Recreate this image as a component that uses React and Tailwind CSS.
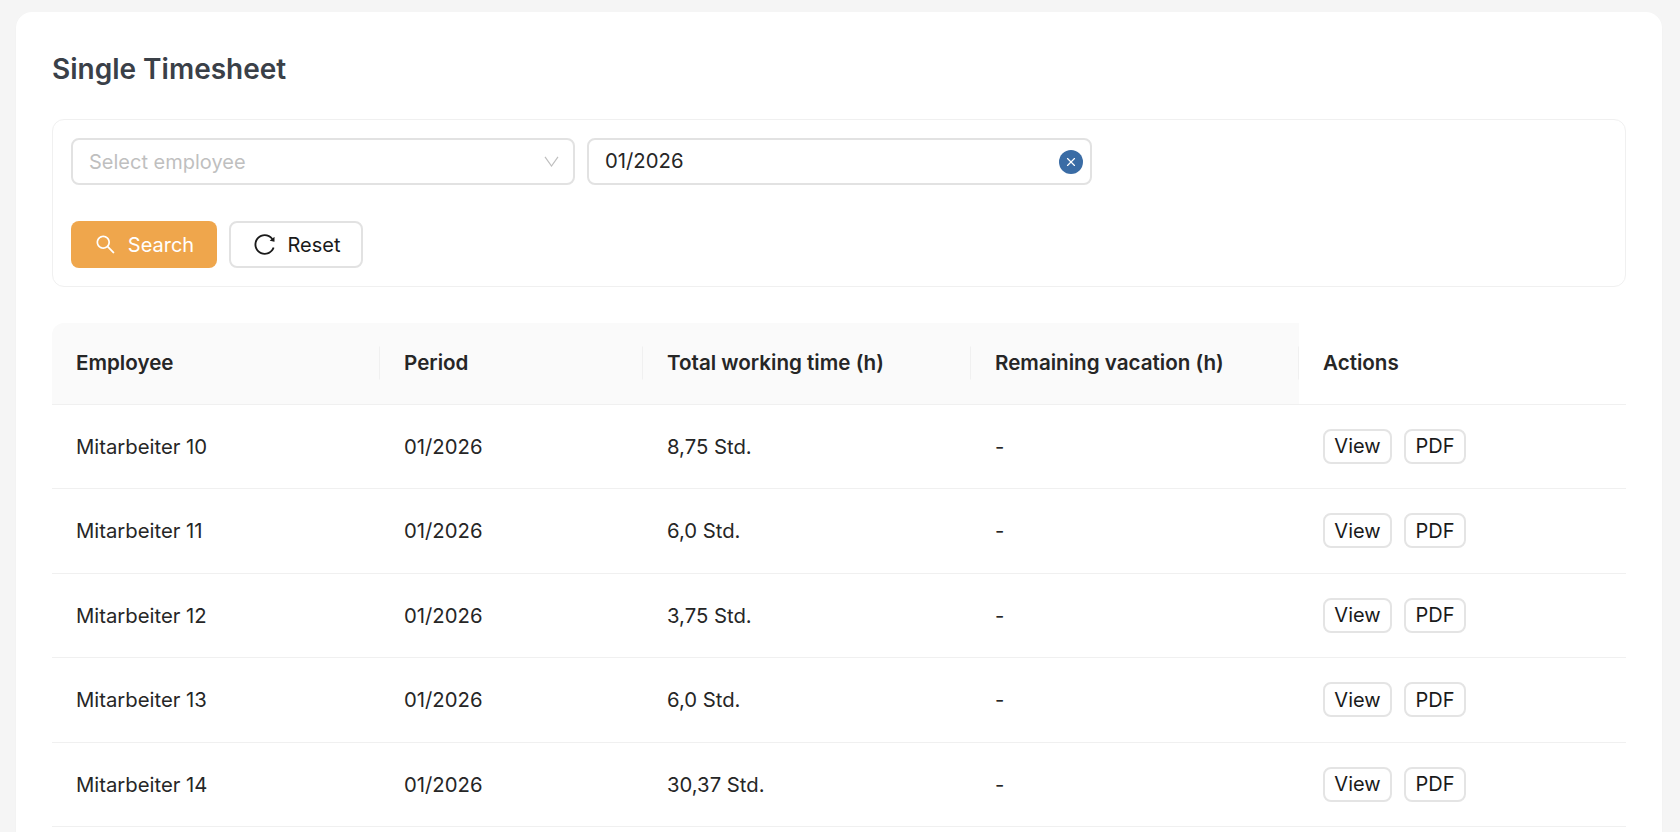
import { X } from 'lucide-react'
import { AiOutlineSearch, AiOutlineReload } from 'react-icons/ai'

const rows = [
  { name: 'Mitarbeiter 10', hours: '8,75 Std.' },
  { name: 'Mitarbeiter 11', hours: '6,0 Std.' },
  { name: 'Mitarbeiter 12', hours: '3,75 Std.' },
  { name: 'Mitarbeiter 13', hours: '6,0 Std.' },
  { name: 'Mitarbeiter 14', hours: '30,37 Std.' }
]

const headers = ['Employee', 'Period', 'Total working time (h)', 'Remaining vacation (h)']

export default function App() {
  return (
    <div className="h-screen overflow-hidden bg-[#f5f5f5] pt-3 pr-[18px] pl-4 font-['Inter',sans-serif] text-[#262626]">
      <div className="h-[900px] rounded-2xl bg-white px-9 pt-[36px] shadow-[0_1px_2px_rgba(0,0,0,0.03)]">
        <h1 className="text-[28px] leading-[42px] font-semibold text-[#3a4048]">Single Timesheet</h1>

        {/* Filter box */}
        <div className="mt-[29px] h-[168px] rounded-xl border border-[#f0f0f0] p-[18px]">
          <div className="flex gap-3">
            <div className="flex h-[47px] w-[504px] items-center justify-between rounded-lg border-2 border-[#e2e2e2] pr-[14px] pl-4">
              <span className="text-[20px] text-[#bfbfbf]">Select employee</span>
              <svg width="15" height="11" viewBox="0 0 15 11" fill="none" stroke="#bfbfbf" strokeWidth="1.2">
                <path d="M1 0.8 L7.5 10 L14 0.8" />
              </svg>
            </div>
            <div className="flex h-[47px] w-[505px] items-center justify-between rounded-lg border-2 border-[#e2e2e2] pr-[7px] pl-4">
              <span className="text-[20.3px]">01/2026</span>
              <span className="flex h-6 w-6 items-center justify-center rounded-full bg-[#3a6ca5] text-white">
                <X size={14} strokeWidth={2} />
              </span>
            </div>
          </div>
          <div className="mt-[36px] flex items-center gap-3">
            <button className="flex h-[47px] w-[146px] items-center justify-center gap-[11px] rounded-lg bg-[#efa64c] text-[20px] text-white">
              <AiOutlineSearch size={23} />
              Search
            </button>
            <button className="flex h-[47px] w-[134px] items-center justify-center gap-[11px] rounded-lg border-2 border-[#e2e2e2] bg-white text-[20px] text-[#1a1a1a]">
              <AiOutlineReload size={25} />
              Reset
            </button>
          </div>
        </div>

        {/* Table */}
        <table className="mt-[36px] w-[1574px] table-fixed border-collapse text-[20.3px]">
          <colgroup>
            <col className="w-[328px]" />
            <col className="w-[263px]" />
            <col className="w-[328px]" />
            <col className="w-[328px]" />
            <col className="w-[327px]" />
          </colgroup>
          <thead>
            <tr className="h-[81px] border-b border-[#f0f0f0] text-[20.6px]">
              {headers.map((header, index) => (
                <th
                  key={header}
                  className={`relative bg-[#fafafa] px-6 text-left font-semibold ${index === 0 ? 'rounded-tl-xl' : ''}`}
                >
                  {header}
                  <span className="absolute top-1/2 right-0 h-[33px] w-px -translate-y-1/2 bg-[#f0f0f0]" />
                </th>
              ))}
              <th className="px-6 text-left font-semibold">Actions</th>
            </tr>
          </thead>
          <tbody>
            {rows.map((row) => (
              <tr key={row.name} className="h-[84.5px] border-b border-[#f0f0f0]">
                <td className="px-6 pt-px">{row.name}</td>
                <td className="px-6 pt-px">01/2026</td>
                <td className="px-6 pt-px">{row.hours}</td>
                <td className="px-6 pt-px">-</td>
                <td className="px-6">
                  <div className="flex gap-3">
                    <button className="h-[35px] w-[69px] rounded-lg border-2 border-[#e4e4e4] bg-white text-[20px] text-[#1a1a1a]">View</button>
                    <button className="h-[35px] w-[62px] rounded-lg border-2 border-[#e4e4e4] bg-white text-[20px] text-[#1a1a1a]">PDF</button>
                  </div>
                </td>
              </tr>
            ))}
          </tbody>
        </table>
      </div>
    </div>
  )
}
